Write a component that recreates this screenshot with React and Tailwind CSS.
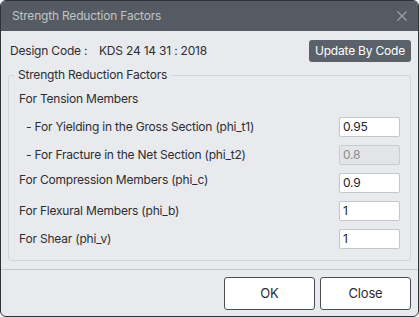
import React from "react";

const font = { fontFamily: "Inter, 'Noto Sans', sans-serif" };

function Input({ value, disabled }) {
  return (
    <div
      className={`w-[61px] h-[20px] border rounded-[2px] flex items-center px-[3px] text-[12px] ${
        disabled
          ? "bg-[#e3e4e7] border-[#c9ccd0] text-[#8a8d92]"
          : "bg-white border-[#c3c6cb] text-[#1d1f22]"
      }`}
    >
      {value}
    </div>
  );
}

function Row({ label, value, disabled, sub, lift }) {
  return (
    <div className="h-[28px] flex items-center justify-between">
      <span className={`${sub ? "pl-[7px]" : ""} ${lift ? "mb-[6px]" : ""}`}>{label}</span>
      {value !== undefined && <Input value={value} disabled={disabled} />}
    </div>
  );
}

export default function App() {
  return (
    <div className="w-[419px] h-[317px] bg-white" style={font}>
      <div className="w-full h-full border border-[#2f3237] rounded-[6px] overflow-hidden flex flex-col bg-[#e9eaee] text-[12px] tracking-[-0.2px] text-[#2b2d31]">
        <div className="h-[30px] bg-[#555b63] flex items-center justify-between pl-[11px] pr-[10px] shrink-0">
          <span className="text-[12px] text-[#c0c4c9]">Strength Reduction Factors</span>
          <svg width="10" height="10" viewBox="0 0 10 10" className="mr-[1px]">
            <path d="M0.5 0.5 L9.5 9.5 M9.5 0.5 L0.5 9.5" stroke="#9ca2a9" strokeWidth="1.2" fill="none" />
          </svg>
        </div>
        <div className="flex items-center justify-between pl-[9px] pr-[7px] pt-[8px] h-[31px] shrink-0">
          <div className="flex items-center">
            <span className="w-[89px]">Design Code :</span>
            <span>KDS 24 14 31 : 2018</span>
          </div>
          <button className="h-[22px] px-[6px] rounded-[3px] bg-[#5b6169] text-white text-[12px]">
            Update By Code
          </button>
        </div>
        <fieldset className="mx-[7px] mt-[5px] border border-[#d3d6da] rounded-[3px] px-0 pb-[7px]">
          <legend className="ml-[5px] px-[4px] leading-[16px] text-[#2b2d31]">Strength Reduction Factors</legend>
          <div className="pt-[2px] pl-[10px] pr-[10px] flex flex-col">
            <Row label="For Tension Members" />
            <Row label="- For Yielding in the Gross Section (phi_t1)" value="0.95" sub />
            <Row label="- For Fracture in the Net Section (phi_t2)" value="0.8" disabled sub />
            <Row label="For Compression Members (phi_c)" value="0.9" lift />
            <Row label="For Flexural Members (phi_b)" value="1" />
            <Row label="For Shear (phi_v)" value="1" />
          </div>
        </fieldset>
        <div className="mt-[8px] border-t border-[#c6c9cd]" />
        <div className="flex justify-end gap-[5px] pr-[7px] pt-[7px]">
          <button className="w-[91px] h-[33px] border border-[#4a4e55] rounded-[3px] bg-white text-[13px] text-[#2b2d31]">
            OK
          </button>
          <button className="w-[91px] h-[33px] border border-[#4a4e55] rounded-[3px] bg-white text-[13px] text-[#2b2d31]">
            Close
          </button>
        </div>
      </div>
    </div>
  );
}
